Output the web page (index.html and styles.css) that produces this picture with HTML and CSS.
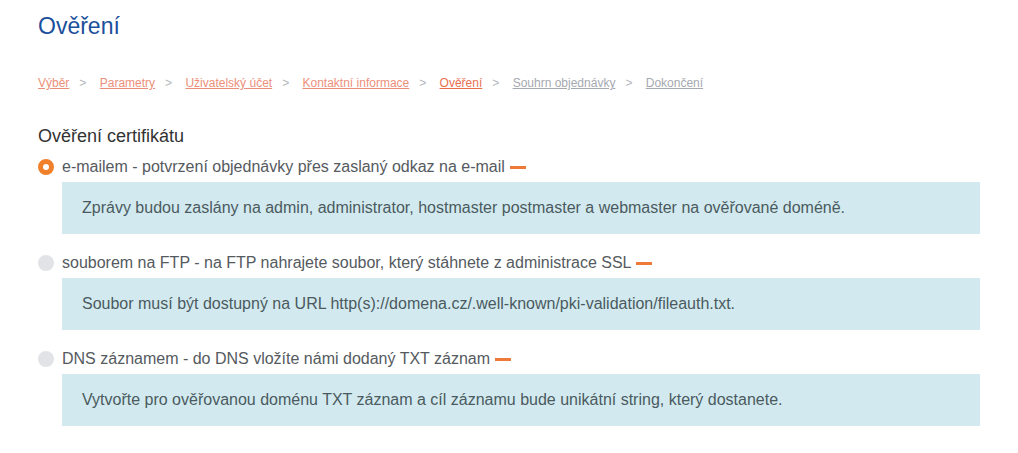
FILE: index.html
```html
<!DOCTYPE html>
<html lang="cs">
<head>
    <meta charset="UTF-8">
    <title>Ověření</title>
    <link rel="stylesheet" href="styles.css">
</head>
<body>
    <div class="page">
        <h1>Ověření</h1>

        <nav class="steps">
            <a href="#" class="done">Výběr</a><span class="sep">&gt;</span>
            <a href="#" class="done">Parametry</a><span class="sep">&gt;</span>
            <a href="#" class="done">Uživatelský účet</a><span class="sep">&gt;</span>
            <a href="#" class="done">Kontaktní informace</a><span class="sep">&gt;</span>
            <a href="#" class="current">Ověření</a><span class="sep">&gt;</span>
            <a href="#" class="todo">Souhrn objednávky</a><span class="sep">&gt;</span>
            <a href="#" class="todo">Dokončení</a>
        </nav>

        <h2>Ověření certifikátu</h2>

        <div class="option">
            <label class="choice">
                <span class="radio checked"></span>
                e-mailem - potvrzení objednávky přes zaslaný odkaz na e-mail
                <span class="dash"></span>
            </label>
            <div class="info">Zprávy budou zaslány na admin, administrator, hostmaster postmaster a webmaster na ověřované doméně.</div>
        </div>

        <div class="option">
            <label class="choice">
                <span class="radio"></span>
                souborem na FTP - na FTP nahrajete soubor, který stáhnete z administrace SSL
                <span class="dash"></span>
            </label>
            <div class="info">Soubor musí být dostupný na URL http(s)://domena.cz/.well-known/pki-validation/fileauth.txt.</div>
        </div>

        <div class="option">
            <label class="choice">
                <span class="radio"></span>
                DNS záznamem - do DNS vložíte námi dodaný TXT záznam
                <span class="dash"></span>
            </label>
            <div class="info">Vytvořte pro ověřovanou doménu TXT záznam a cíl záznamu bude unikátní string, který dostanete.</div>
        </div>
    </div>
</body>
</html>
```

FILE: styles.css
```css
html,
body {
    margin: 0;
    padding: 0;
    background: #fff;
    font-family: "Liberation Sans", Arial, sans-serif;
}
.page {
    padding: 11px 38px 0 38px;
    width: 942px;
}
h1 {
    margin: 0;
    font-size: 23px;
    font-weight: normal;
    color: #1b4f9c;
    line-height: 30px;
}
.steps {
    margin-top: 34px;
    font-size: 12px;
    line-height: 16px;
}
.steps a {
    text-decoration: underline;
}
.steps a.done {
    color: #ec8f7a;
}
.steps a.current {
    color: #e9704f;
}
.steps a.todo {
    color: #a5a9b0;
}
.steps .sep {
    color: #b3b6bc;
    margin: 0 10px;
}
h2 {
    margin: 34px 0 0 0;
    font-size: 18px;
    font-weight: normal;
    color: #333;
    line-height: 22px;
}
.option {
    margin-top: 9px;
}
.option + .option {
    margin-top: 18px;
}
.choice {
    display: flex;
    align-items: center;
    gap: 8px;
    padding-bottom: 4px;
    font-size: 16px;
    line-height: 22px;
    color: #555a60;
}
.radio {
    width: 16px;
    height: 16px;
    border-radius: 50%;
    background: #e1e3e7;
    box-sizing: border-box;
    flex: none;
}
.radio.checked {
    background: #fff;
    border: 5px solid #f0802a;
}
.dash {
    width: 16px;
    height: 3px;
    background: #ee7a3a;
    margin-left: -3px;
}
.info {
    margin: 0 0 0 24px;
    padding: 15px 20px;
    background: #d2eaef;
    font-size: 16px;
    line-height: 22px;
    color: #4b5a60;
}
```
